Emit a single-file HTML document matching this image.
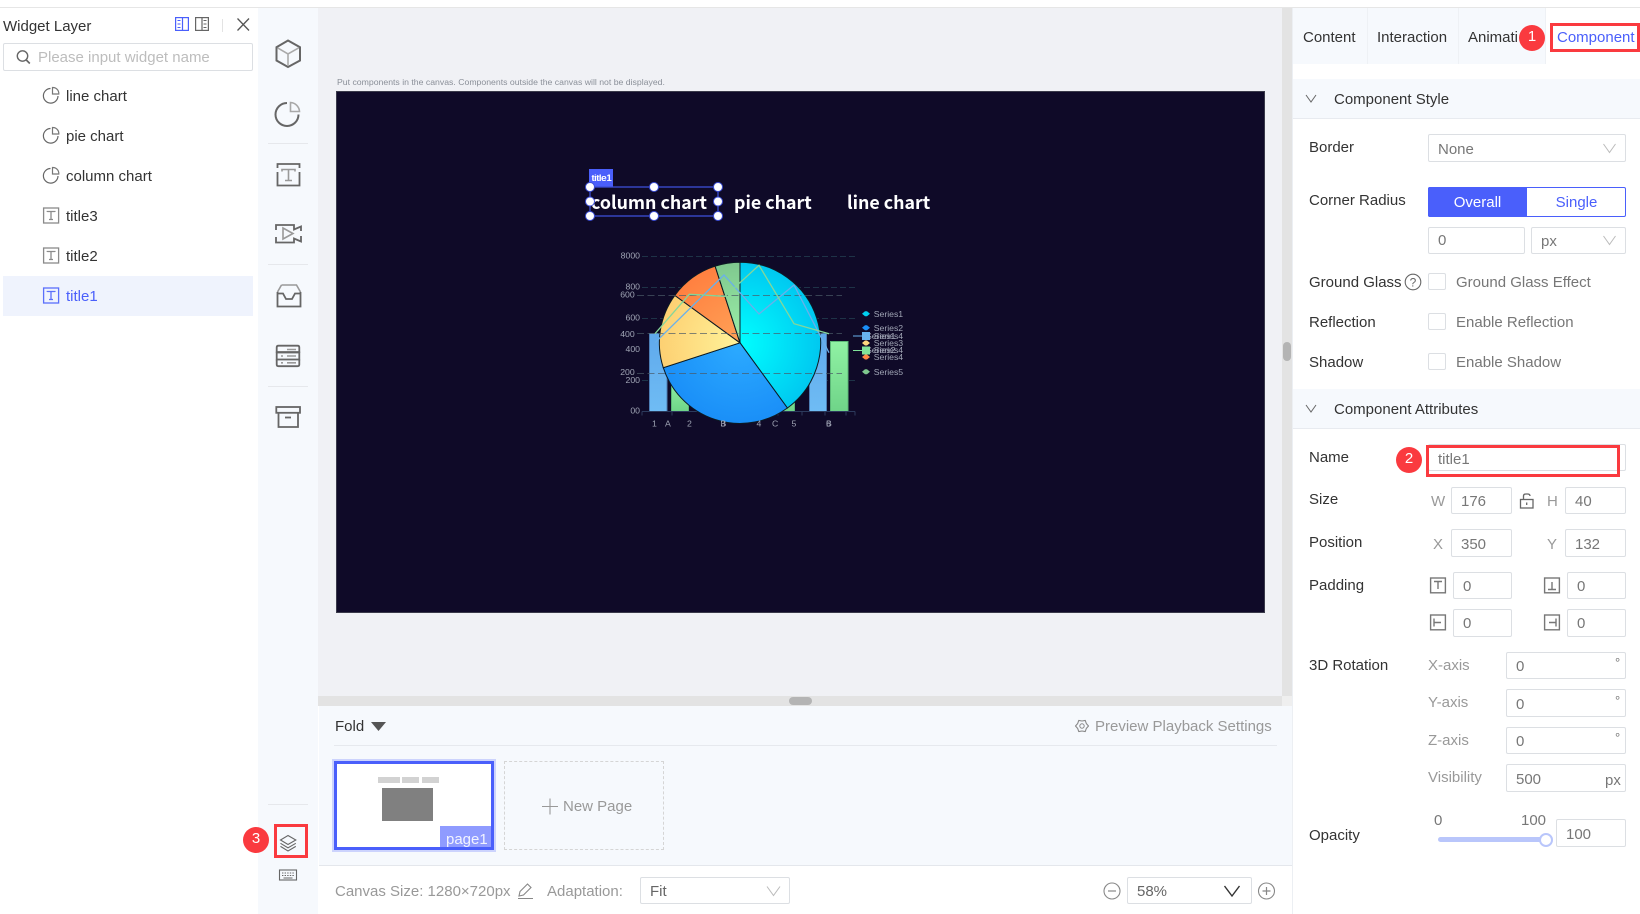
<!DOCTYPE html>
<html><head><meta charset="utf-8"><title>Widget Layer</title>
<style>
*{box-sizing:border-box;margin:0;padding:0}
html,body{width:1640px;height:914px;overflow:hidden;background:#fff}
body{position:relative;font-family:"Liberation Sans",sans-serif;font-size:15px;color:#333}
.r{position:absolute}
.t{position:absolute;line-height:20px;white-space:nowrap;margin-top:1px}
.g{color:#777}.l{color:#999}
.b{position:absolute;border:1px solid #dcdfe3;border-radius:2px;background:#fff}
svg{position:absolute;left:0;top:0}
</style></head><body>
<!-- backgrounds -->
<div class="r" style="left:0;top:7px;width:1640px;height:1px;background:#e6e6e6"></div>
<div class="r" style="left:258px;top:8px;width:60px;height:906px;background:#f6f9fd"></div>
<div class="r" style="left:318px;top:8px;width:964px;height:688px;background:#f0f1f5"></div>
<div class="r" style="left:1282px;top:8px;width:10px;height:688px;background:#e3e3e3"></div>
<div class="r" style="left:1283px;top:342px;width:8px;height:19px;border-radius:4px;background:#b4b4b4"></div>
<div class="r" style="left:318px;top:696px;width:964px;height:10px;background:#e3e3e3"></div>
<div class="r" style="left:1282px;top:696px;width:10px;height:10px;background:#efefef"></div>
<div class="r" style="left:789px;top:697px;width:23px;height:8px;border-radius:4px;background:#b4b4b4"></div>
<div class="r" style="left:319px;top:706px;width:973px;height:160px;background:#f6f9fd;border-bottom:1px solid #e4e7ec"></div>
<div class="r" style="left:1292px;top:8px;width:1px;height:906px;background:#eceff3"></div>
<div class="r" style="left:336px;top:91px;width:929px;height:522px;background:#0f0a28;border:1px solid #3a3a4a"></div>
<div class="r" style="left:1293px;top:8px;width:253px;height:56px;background:#f6f9fd"></div>
<div class="r" style="left:1367px;top:8px;width:1px;height:56px;background:#eef1f5"></div>
<div class="r" style="left:1458px;top:8px;width:1px;height:56px;background:#eef1f5"></div>
<div class="r" style="left:1545px;top:8px;width:1px;height:56px;background:#eef1f5"></div>
<div class="r" style="left:1293px;top:79px;width:347px;height:40px;background:#f6f9fd;border-bottom:1px solid #e8ebf0"></div>
<div class="r" style="left:1293px;top:389px;width:347px;height:40px;background:#f6f9fd;border-bottom:1px solid #e8ebf0"></div>
<div class="r" style="left:3px;top:276px;width:250px;height:40px;background:#eff3fd"></div>
<div class="r" style="left:268px;top:143px;width:40px;height:1px;background:#e6e8ec"></div>
<div class="r" style="left:268px;top:264px;width:40px;height:1px;background:#e6e8ec"></div>
<div class="r" style="left:268px;top:386px;width:40px;height:1px;background:#e6e8ec"></div>
<div class="r" style="left:268px;top:804px;width:40px;height:1px;background:#e6e8ec"></div>
<div class="r" style="left:334px;top:745px;width:943px;height:1px;background:#e6e9ee"></div>

<!-- left panel -->
<div class="t" style="left:3px;top:16px">Widget Layer</div>
<div class="b" style="left:3px;top:43px;width:250px;height:28px"></div>
<div class="t" style="left:38px;top:47px;color:#bdbdbd">Please input widget name</div>
<div class="t" style="left:66px;top:86px">line chart</div>
<div class="t" style="left:66px;top:126px">pie chart</div>
<div class="t" style="left:66px;top:166px">column chart</div>
<div class="t" style="left:66px;top:206px">title3</div>
<div class="t" style="left:66px;top:246px">title2</div>
<div class="t" style="left:66px;top:286px;color:#4a5ffb">title1</div>

<!-- hint -->
<div class="t" style="left:337px;top:71px;font-size:8.7px;color:#8a8f98">Put components in the canvas. Components outside the canvas will not be displayed.</div>

<!-- titles on canvas -->
<div class="r" style="left:589px;top:169px;width:24px;height:18px;background:#4a5ffb"></div>
<div class="t" style="left:591.5px;top:168px;font-size:9.5px;color:#fff;text-shadow:.5px 0 #fff">title1</div>
<div class="t" style="left:591px;top:189px;font-family:'Noto Sans CJK SC','Liberation Sans',sans-serif;font-weight:700;font-size:17.8px;line-height:24px;color:#fff">column chart</div>
<div class="t" style="left:734px;top:189px;font-family:'Noto Sans CJK SC','Liberation Sans',sans-serif;font-weight:700;font-size:17.8px;line-height:24px;color:#fff">pie chart</div>
<div class="t" style="left:847px;top:189px;font-family:'Noto Sans CJK SC','Liberation Sans',sans-serif;font-weight:700;font-size:17.8px;line-height:24px;color:#fff">line chart</div>

<!-- Page strip -->
<div class="t" style="left:335px;top:716px">Fold</div>
<div class="t l" style="left:1095px;top:716px">Preview Playback Settings</div>
<div class="r" style="left:332px;top:759px;width:164px;height:93px;border:2px solid #ccd3fd"></div>
<div class="r" style="left:334px;top:761px;width:160px;height:89px;background:#fff;border:3px solid #4a5ffb"></div>
<div class="r" style="left:378px;top:777px;width:22px;height:6px;background:#d2d2d2"></div>
<div class="r" style="left:402px;top:777px;width:17px;height:6px;background:#d2d2d2"></div>
<div class="r" style="left:422px;top:777px;width:17px;height:6px;background:#d2d2d2"></div>
<div class="r" style="left:382px;top:788px;width:51px;height:33px;background:#808080"></div>
<div class="r" style="left:440px;top:826px;width:51px;height:21px;background:#8f9bff"></div>
<div class="t" style="left:446px;top:829px;color:#f2f3ff">page1</div>
<div class="r" style="left:504px;top:761px;width:160px;height:89px;border:1px dashed #d5d5d5"></div>
<div class="t l" style="left:563px;top:796px">New Page</div>

<!-- bottom bar -->
<div class="t l" style="left:335px;top:881px">Canvas Size: 1280×720px</div>
<div class="t l" style="left:547px;top:881px">Adaptation:</div>
<div class="b" style="left:640px;top:877px;width:150px;height:27px"></div>
<div class="t" style="left:650px;top:881px;color:#666">Fit</div>
<div class="b" style="left:1127px;top:877px;width:125px;height:27px"></div>
<div class="t" style="left:1137px;top:881px;color:#666">58%</div>

<!-- right tabs -->
<div class="t" style="left:1303px;top:27px">Content</div>
<div class="t" style="left:1377px;top:27px">Interaction</div>
<div class="t" style="left:1468px;top:27px">Animati</div>
<div class="t" style="left:1557px;top:27px;color:#4a5ffb">Component</div>
<div class="r" style="left:1550px;top:23px;width:90px;height:29px;border:3px solid #fa3a3f"></div>
<div class="r" style="left:1519px;top:25px;width:26px;height:26px;border-radius:50%;background:#fa3a3f"></div>
<div class="t" style="left:1519px;top:26px;width:26px;text-align:center;color:#fff">1</div>

<div class="t" style="left:1334px;top:89px">Component Style</div>
<div class="t" style="left:1309px;top:137px">Border</div>
<div class="b" style="left:1428px;top:134px;width:198px;height:28px"></div>
<div class="t g" style="left:1438px;top:139px">None</div>
<div class="t" style="left:1309px;top:190px">Corner Radius</div>
<div class="r" style="left:1428px;top:187px;width:198px;height:30px;border:1px solid #4a5ffb;border-radius:2px;background:#fff"></div>
<div class="r" style="left:1428px;top:187px;width:99px;height:30px;background:#4a5ffb;border-radius:2px 0 0 2px"></div>
<div class="t" style="left:1428px;top:192px;width:99px;text-align:center;color:#fff">Overall</div>
<div class="t" style="left:1527px;top:192px;width:99px;text-align:center;color:#4a5ffb">Single</div>
<div class="b" style="left:1428px;top:227px;width:97px;height:27px"></div>
<div class="t g" style="left:1438px;top:230px">0</div>
<div class="b" style="left:1531px;top:227px;width:95px;height:27px"></div>
<div class="t g" style="left:1541px;top:231px">px</div>

<div class="t" style="left:1309px;top:272px">Ground Glass</div>
<div class="b" style="left:1428px;top:273px;width:18px;height:17px"></div>
<div class="t g" style="left:1456px;top:272px">Ground Glass Effect</div>
<div class="t" style="left:1309px;top:312px">Reflection</div>
<div class="b" style="left:1428px;top:313px;width:18px;height:17px"></div>
<div class="t g" style="left:1456px;top:312px">Enable Reflection</div>
<div class="t" style="left:1309px;top:352px">Shadow</div>
<div class="b" style="left:1428px;top:353px;width:18px;height:17px"></div>
<div class="t g" style="left:1456px;top:352px">Enable Shadow</div>

<div class="t" style="left:1334px;top:399px">Component Attributes</div>
<div class="t" style="left:1309px;top:447px">Name</div>
<div class="b" style="left:1428px;top:444px;width:198px;height:27px"></div>
<div class="t g" style="left:1438px;top:449px">title1</div>
<div class="r" style="left:1426px;top:445px;width:194px;height:32px;border:3px solid #fa3a3f"></div>
<div class="r" style="left:1396px;top:447px;width:26px;height:26px;border-radius:50%;background:#fa3a3f"></div>
<div class="t" style="left:1396px;top:448px;width:26px;text-align:center;color:#fff">2</div>

<div class="t" style="left:1309px;top:489px">Size</div>
<div class="t l" style="left:1431px;top:491px">W</div>
<div class="b" style="left:1451px;top:487px;width:61px;height:27px"></div>
<div class="t g" style="left:1461px;top:491px">176</div>
<div class="t l" style="left:1547px;top:491px">H</div>
<div class="b" style="left:1565px;top:487px;width:61px;height:27px"></div>
<div class="t g" style="left:1575px;top:491px">40</div>

<div class="t" style="left:1309px;top:532px">Position</div>
<div class="t l" style="left:1433px;top:534px">X</div>
<div class="b" style="left:1451px;top:529px;width:61px;height:28px"></div>
<div class="t g" style="left:1461px;top:534px">350</div>
<div class="t l" style="left:1547px;top:534px">Y</div>
<div class="b" style="left:1565px;top:529px;width:61px;height:28px"></div>
<div class="t g" style="left:1575px;top:534px">132</div>

<div class="t" style="left:1309px;top:575px">Padding</div>
<div class="b" style="left:1453px;top:572px;width:59px;height:27px"></div>
<div class="t g" style="left:1463px;top:576px">0</div>
<div class="b" style="left:1567px;top:572px;width:59px;height:27px"></div>
<div class="t g" style="left:1577px;top:576px">0</div>
<div class="b" style="left:1453px;top:609px;width:59px;height:28px"></div>
<div class="t g" style="left:1463px;top:613px">0</div>
<div class="b" style="left:1567px;top:609px;width:59px;height:28px"></div>
<div class="t g" style="left:1577px;top:613px">0</div>

<div class="t" style="left:1309px;top:655px">3D Rotation</div>
<div class="t l" style="left:1428px;top:655px">X-axis</div>
<div class="b" style="left:1506px;top:652px;width:120px;height:27px"></div>
<div class="t g" style="left:1516px;top:656px">0</div>
<div class="t g" style="left:1615px;top:652px;font-size:13px">°</div>
<div class="t l" style="left:1428px;top:692px">Y-axis</div>
<div class="b" style="left:1506px;top:689px;width:120px;height:28px"></div>
<div class="t g" style="left:1516px;top:694px">0</div>
<div class="t g" style="left:1615px;top:690px;font-size:13px">°</div>
<div class="t l" style="left:1428px;top:730px">Z-axis</div>
<div class="b" style="left:1506px;top:727px;width:120px;height:27px"></div>
<div class="t g" style="left:1516px;top:731px">0</div>
<div class="t g" style="left:1615px;top:727px;font-size:13px">°</div>
<div class="t l" style="left:1428px;top:767px">Visibility</div>
<div class="b" style="left:1506px;top:764px;width:120px;height:28px"></div>
<div class="t g" style="left:1516px;top:769px">500</div>
<div class="t g" style="left:1605px;top:770px">px</div>

<div class="t" style="left:1309px;top:825px">Opacity</div>
<div class="t g" style="left:1434px;top:810px">0</div>
<div class="t g" style="left:1521px;top:810px">100</div>
<div class="r" style="left:1438px;top:837px;width:106px;height:5px;border-radius:3px;background:#b9c6fb"></div>
<div class="r" style="left:1539px;top:833px;width:14px;height:14px;border-radius:50%;background:#fff;border:2px solid #b9c6fb"></div>
<div class="b" style="left:1556px;top:819px;width:70px;height:28px"></div>
<div class="t g" style="left:1566px;top:824px">100</div>

<div class="r" style="left:243px;top:827px;width:26px;height:26px;border-radius:50%;background:#fa3a3f"></div>
<div class="t" style="left:243px;top:828px;width:26px;text-align:center;color:#fff">3</div>
<div class="r" style="left:274px;top:824px;width:34px;height:34px;border:3px solid #fa3a3f"></div>

<svg width="1640" height="914" viewBox="0 0 1640 914" fill="none">
<defs>
<radialGradient id="c1" gradientUnits="userSpaceOnUse" cx="740" cy="343" r="80.6"><stop offset="0" stop-color="#00ffff"/><stop offset="1" stop-color="#00c8f0"/></radialGradient>
<radialGradient id="c2" gradientUnits="userSpaceOnUse" cx="740" cy="343" r="80.6"><stop offset="0" stop-color="#2cabff"/><stop offset="1" stop-color="#1a8ff8"/></radialGradient>
<radialGradient id="c3" gradientUnits="userSpaceOnUse" cx="740" cy="343" r="80.6"><stop offset="0" stop-color="#fff39a"/><stop offset="1" stop-color="#fdd072"/></radialGradient>
<radialGradient id="c4" gradientUnits="userSpaceOnUse" cx="740" cy="343" r="80.6"><stop offset="0" stop-color="#ffa257"/><stop offset="1" stop-color="#ff8040"/></radialGradient>
<radialGradient id="c5" gradientUnits="userSpaceOnUse" cx="740" cy="343" r="80.6"><stop offset="0" stop-color="#9cf0aa"/><stop offset="1" stop-color="#7fc88e"/></radialGradient>
<linearGradient id="bb" x1="0" y1="0" x2="0" y2="1"><stop offset="0" stop-color="#5fa9ec"/><stop offset="1" stop-color="#6fbcf4"/></linearGradient>
<linearGradient id="bg" x1="0" y1="0" x2="0" y2="1"><stop offset="0" stop-color="#90f2a4"/><stop offset="1" stop-color="#6fd488"/></linearGradient>
</defs>

<!-- chart: underlying grid -->
<g stroke="#1e3347" stroke-width="1" stroke-dasharray="6 3">
<path d="M642 256.5H855M642 287.5H855M642 318.5H855M642 380.5H855"/>
</g>
<g stroke="#4d7fb5" fill="url(#bb)"><rect x="649.5" y="333.5" width="17.5" height="78"/><rect x="809.5" y="333.5" width="17" height="78"/></g>
<g stroke="#5cb877" fill="url(#bg)"><rect x="671.5" y="380.5" width="17" height="31"/><rect x="777.5" y="380.5" width="17" height="31"/><rect x="830.5" y="341.5" width="17.5" height="70"/></g>
<path d="M642 411.5H855" stroke="#2c3a5c"/>
<path d="M642 411.5v4M672 411.5v4M707 411.5v4M742 411.5v4M778 411.5v4M802 411.5v4M825 411.5v4M846 411.5v4M855 411.5v4" stroke="#2c3a5c"/>
<!-- pie -->
<g stroke="#0c1a22" stroke-width="1">
<path d="M740 342.8V262.2A80.6 80.6 0 0 1 787.4 408Z" fill="url(#c1)"/>
<path d="M740 342.8L787.4 408A80.6 80.6 0 0 1 663.3 367.7Z" fill="url(#c2)"/>
<path d="M740 342.8L663.3 367.7A80.6 80.6 0 0 1 674.8 295.4Z" fill="url(#c3)"/>
<path d="M740 342.8L674.8 295.4A80.6 80.6 0 0 1 715.1 266.2Z" fill="url(#c4)"/>
<path d="M740 342.8L715.1 266.2A80.6 80.6 0 0 1 740 262.2Z" fill="url(#c5)"/>
</g>
<!-- overlay grid + lines -->
<g stroke="#4a5a66" stroke-opacity=".7" stroke-width="1" stroke-dasharray="7 3.5">
<path d="M637 295.5H842M637 333.5H842M637 373.5H842"/>
</g>
<polyline points="655,342.7 724,275 759,314 794,285 829,352.7" stroke="#6ab0ea" stroke-width="1.3"/>
<polyline points="655,333.7 689.3,294.3 725,296.3 759,265.3 794,323.7 829,333.7" stroke="#85d69a" stroke-width="1.3"/>
<!-- chart labels -->
<g font-family="Liberation Sans, sans-serif" font-size="8.7" fill="#a0a5b5">
<g text-anchor="end">
<text x="640" y="258.7">8000</text><text x="640" y="289.7">800</text><text x="634.7" y="297.5">600</text><text x="640" y="320.7">600</text><text x="634.7" y="336.8">400</text><text x="640" y="352">400</text><text x="634.7" y="374.8">200</text><text x="640" y="383">200</text><text x="640" y="413.7">00</text>
</g>
<text x="652" y="426.7">1</text><text x="665" y="426.7">A</text><text x="687" y="426.7">2</text><text x="720.5" y="426.7">B</text><text x="720.5" y="426.7">3</text><text x="756.5" y="426.7">4</text><text x="772" y="426.7">C</text><text x="791.5" y="426.7">5</text><text x="826" y="426.7">B</text><text x="826" y="426.7">6</text>
<text x="873.7" y="316.8">Series1</text><text x="873.7" y="330.8">Series2</text><text x="866" y="338.8">Series1</text><text x="873.7" y="338.8">Series4</text><text x="873.7" y="346">Series3</text><text x="866" y="353">Series2</text><text x="873.7" y="353">Series4</text><text x="873.7" y="360">Series4</text><text x="873.7" y="374.8">Series5</text>
</g>
<g>
<path d="M862 313.7L865 311.2 867 311.2 870 313.7 867 316.2 865 316.2Z" fill="#00d0f0"/>
<path d="M862 327.7L865 325.2 867 325.2 870 327.7 867 330.2 865 330.2Z" fill="#1a8ff8"/>
<path d="M862 343L865 340.5 867 340.5 870 343 867 345.5 865 345.5Z" fill="#fdd87e"/>
<path d="M862 357L865 354.5 867 354.5 870 357 867 359.5 865 359.5Z" fill="#ff8844"/>
<path d="M862 371.7L865 369.2 867 369.2 870 371.7 867 374.2 865 374.2Z" fill="#7fc88e"/>
<rect x="862" y="332" width="8" height="8" fill="#68b2ee"/><path d="M853 336h17" stroke="#68b2ee"/>
<rect x="862" y="346.5" width="8" height="8" fill="#80e49a"/><path d="M853 350.5h17" stroke="#80e49a"/>
</g>
<!-- selection -->
<rect x="590" y="187" width="128" height="29" stroke="#3d4fd6" stroke-width="1.3"/>
<g fill="#fff" stroke="#3d4fd6" stroke-width="1">
<circle cx="590" cy="187" r="4.5"/><circle cx="654" cy="187" r="4.5"/><circle cx="718" cy="187" r="4.5"/><circle cx="590" cy="201.5" r="4.5"/><circle cx="718" cy="201.5" r="4.5"/><circle cx="590" cy="216" r="4.5"/><circle cx="654" cy="216" r="4.5"/><circle cx="718" cy="216" r="4.5"/>
</g>

<!-- left header icons -->
<g stroke="#4a5ffb" stroke-width="1.2"><rect x="175.6" y="17.6" width="12.8" height="12.8"/><path d="M182.5 17.6V30.4"/><path d="M177.5 20.5h3M177.5 24h3M177.5 27.5h3" stroke-width="1"/></g>
<g stroke="#666" stroke-width="1.2"><rect x="195.6" y="17.6" width="12.8" height="12.8"/><path d="M202 17.6V30.4"/><path d="M203.5 20.5h3M203.5 24h3M203.5 27.5h3" stroke-width="1"/></g>
<path d="M222.5 19v13" stroke="#e3e3e3"/>
<path d="M237.5 18.5L249 30.5M249 18.5L237.5 30.5" stroke="#555" stroke-width="1.3"/>
<circle cx="22.5" cy="56" r="5.2" stroke="#666" stroke-width="1.4"/><path d="M26.3 60L29.8 63.5" stroke="#666" stroke-width="1.6"/>
<!-- list icons -->
<g transform="translate(0,-1)">
<g stroke="#666" stroke-width="1.2">
<path d="M50.5 89.5A7.3 7.3 0 1 0 58 97"/><path d="M52.5 88.5A6 6 0 0 1 58.8 95H52.5Z" stroke="#777"/>
<path d="M50.5 129.5A7.3 7.3 0 1 0 58 137"/><path d="M52.5 128.5A6 6 0 0 1 58.8 135H52.5Z" stroke="#777"/>
<path d="M50.5 169.5A7.3 7.3 0 1 0 58 177"/><path d="M52.5 168.5A6 6 0 0 1 58.8 175H52.5Z" stroke="#777"/>
</g>
<g stroke="#8a8a8a" stroke-width="1.3">
<rect x="43.6" y="209" width="15" height="15"/><path d="M47.3 213v-.5h7.6v.5M51 212.5V220.5M49 220.5h4"/>
<rect x="43.6" y="249" width="15" height="15"/><path d="M47.3 253v-.5h7.6v.5M51 252.5V260.5M49 260.5h4"/>
</g>
<g stroke="#5a6ffb" stroke-width="1.3">
<rect x="43.6" y="289" width="15" height="15"/><path d="M47.3 293v-.5h7.6v.5M51 292.5V300.5M49 300.5h4"/>
</g>
</g>

<!-- tool strip icons -->
<path d="M288 40.5L300 47.2V60.5L288 67L276.5 60.5V47.2Z" stroke="#666" stroke-width="2"/>
<path d="M277.5 47.8L288 54 298.8 47.8M288 54V66" stroke="#aaa" stroke-width="1.6"/>
<path d="M287 103A11.5 11.5 0 1 0 298.5 114.5" stroke="#666" stroke-width="2"/>
<path d="M290.5 102.5A9.5 9.5 0 0 1 299.5 111.5H290.5Z" stroke="#a8a8a8" stroke-width="1.6"/>
<path d="M277.5 168V164H299.5V168M277.5 172V185.5H299.5V172" stroke="#666" stroke-width="1.8"/>
<path d="M282 171.5V169.5H295V171.5M288.5 169.5V180.5M285 180.5H292" stroke="#999" stroke-width="1.6"/>
<path d="M276 230V225H294V229.5L301 226.5V231M301 236V241.5L294 238.5V242.5H276V237" stroke="#666" stroke-width="1.8"/>
<path d="M283 228V239L293 233.5Z" stroke="#999" stroke-width="1.6"/>
<path d="M281.5 285H296.5L300.5 292" stroke="#999" stroke-width="1.6"/><path d="M281.5 285L277.5 292" stroke="#999" stroke-width="1.6"/>
<path d="M277.5 292V306.5H300.5V292M277.5 293.5H283L286 299H292L295 293.5H300.5" stroke="#666" stroke-width="1.8"/>
<path d="M276.7 352V347.5Q276.7 345.7 278.5 345.7H297.5Q299.3 345.7 299.3 347.5V352Z" stroke="#666" stroke-width="1.8"/>
<rect x="276.7" y="352.5" width="22.6" height="7" stroke="#666" stroke-width="1.8"/>
<path d="M276.7 359.5V364.5Q276.7 366.2 278.5 366.2H297.5Q299.3 366.2 299.3 364.5V359.5" stroke="#666" stroke-width="1.8"/>
<path d="M287 349.5h9M287 356h9M287 362.8h9M281 356h2M281 362.8h2" stroke="#999" stroke-width="1.6"/>
<rect x="276.3" y="407" width="23.7" height="5.8" stroke="#666" stroke-width="1.8"/>
<path d="M278.5 413V427H298V413" stroke="#666" stroke-width="1.8"/>
<path d="M285 417.5h6" stroke="#666" stroke-width="1.8"/>

<path d="M288 835.5L295.8 840L288 844.5L280.5 840Z" stroke="#666" stroke-width="1.1"/>
<path d="M280.5 843.3L288 847.8L295.8 843.3M280.5 846.4L288 851L295.8 846.4" stroke="#666" stroke-width="1.1"/>
<rect x="279.5" y="870" width="17" height="10" stroke="#666" stroke-width="1.1"/>
<path d="M282 873h12M282 875.5h12" stroke="#666" stroke-dasharray="1.4 1.2"/><path d="M283.5 878h9" stroke="#666"/>

<!-- section chevrons -->
<path d="M1306 95L1311 102L1316 95" stroke="#666"/>
<path d="M1306 405L1311 412L1316 405" stroke="#666"/>
<path d="M1603.5 144L1609.5 152.5L1615.5 144" stroke="#bbb"/>
<path d="M1603.5 236L1609.5 244.5L1615.5 236" stroke="#bbb"/>
<path d="M767 886.5L773.5 895.5L780 886.5" stroke="#bbb"/>
<path d="M1224.5 886L1232 896L1239.5 886" stroke="#333" stroke-width="1.4"/>
<!-- help -->
<circle cx="1413" cy="282" r="7.8" stroke="#666" stroke-width="1.1"/>
<text x="1413" y="286.5" text-anchor="middle" font-family="Liberation Sans, sans-serif" font-size="12" fill="#666">?</text>
<!-- lock -->
<rect x="1520.5" y="499.5" width="12.5" height="8.5" stroke="#666" stroke-width="1.3"/><path d="M1523.5 499V496Q1523.5 494 1526 494H1527.5Q1530 494 1530 496" stroke="#666" stroke-width="1.3"/><path d="M1526.7 502.5v2.5" stroke="#666" stroke-width="1.3"/>
<!-- padding icons -->
<g stroke="#777" stroke-width="1.4" transform="translate(0,-1)">
<rect x="1430.6" y="579" width="14.8" height="14.8"/><path d="M1434 582.5H1442M1438 582.5V590"/>
<rect x="1544.6" y="579" width="14.8" height="14.8"/><path d="M1548 590.5H1556M1552 590.5V583"/>
<rect x="1430.6" y="616" width="14.8" height="14.8"/><path d="M1434 619.5V627.5M1434 623.5H1441"/>
<rect x="1544.6" y="616" width="14.8" height="14.8"/><path d="M1556 619.5V627.5M1556 623.5H1549"/>
</g>
<!-- fold triangle, gear, plus, pencil, zoom -->
<path d="M371 722H386L378.5 731Z" fill="#555"/>
<path d="M1088.5 726L1086.3 723.5 1085.25 720.4 1082 721 1078.75 720.4 1077.7 723.5 1075.5 726 1077.7 728.5 1078.75 731.6 1082 731 1085.25 731.6 1086.3 728.5Z" stroke="#888" stroke-width="1.1" stroke-linejoin="round"/><circle cx="1082" cy="726" r="2.2" stroke="#888"/>
<path d="M542 806.5H558M550 798.5V814.5" stroke="#999" stroke-width="1.1"/>
<path d="M519 896L520 891.5L527.5 884L531 887.5L523.5 895Z" stroke="#888" stroke-width="1.1"/><path d="M518 898.5H533" stroke="#888"/>
<circle cx="1112" cy="891" r="8" stroke="#888" stroke-width="1.1"/><path d="M1108 891h8" stroke="#888" stroke-width="1.2"/>
<circle cx="1266.5" cy="891" r="8" stroke="#888" stroke-width="1.1"/><path d="M1262.5 891h8M1266.5 887v8" stroke="#888" stroke-width="1.2"/>
</svg>
</body></html>
